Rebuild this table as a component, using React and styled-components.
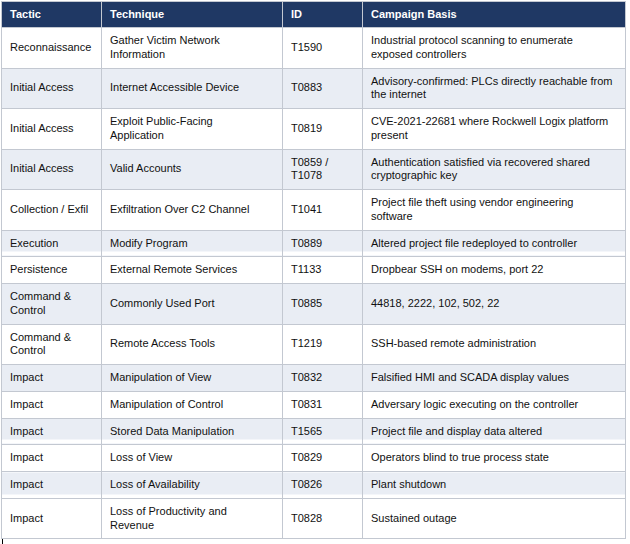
import React from 'react'
import styled, { createGlobalStyle } from 'styled-components'

const GlobalStyle = createGlobalStyle`
  body {
    margin: 0;
    background: #fff;
    font-family: "Liberation Sans", Arial, sans-serif;
  }
`

// width and right padding per column, taken from the source layout
const columns = [
  { title: 'Tactic', width: 100, padRight: 8 },
  { title: 'Technique', width: 181, padRight: 14 },
  { title: 'ID', width: 80, padRight: 8 },
  { title: 'Campaign Basis', width: 263, padRight: 10 },
]

const rows = [
  ['Reconnaissance', 'Gather Victim Network Information', 'T1590', 'Industrial protocol scanning to enumerate exposed controllers'],
  ['Initial Access', 'Internet Accessible Device', 'T0883', 'Advisory-confirmed: PLCs directly reachable from the internet'],
  ['Initial Access', 'Exploit Public-Facing Application', 'T0819', 'CVE-2021-22681 where Rockwell Logix platform present'],
  ['Initial Access', 'Valid Accounts', 'T0859 / T1078', 'Authentication satisfied via recovered shared cryptographic key'],
  ['Collection / Exfil', 'Exfiltration Over C2 Channel', 'T1041', 'Project file theft using vendor engineering software'],
  ['Execution', 'Modify Program', 'T0889', 'Altered project file redeployed to controller', true],
  ['Persistence', 'External Remote Services', 'T1133', 'Dropbear SSH on modems, port 22'],
  ['Command & Control', 'Commonly Used Port', 'T0885', '44818, 2222, 102, 502, 22'],
  ['Command & Control', 'Remote Access Tools', 'T1219', 'SSH-based remote administration'],
  ['Impact', 'Manipulation of View', 'T0832', 'Falsified HMI and SCADA display values'],
  ['Impact', 'Manipulation of Control', 'T0831', 'Adversary logic executing on the controller'],
  ['Impact', 'Stored Data Manipulation', 'T1565', 'Project file and display data altered', true],
  ['Impact', 'Loss of View', 'T0829', 'Operators blind to true process state'],
  ['Impact', 'Loss of Availability', 'T0826', 'Plant shutdown', true],
  ['Impact', 'Loss of Productivity and Revenue', 'T0828', 'Sustained outage'],
]

const Page = styled.div`
  padding: 1px 0 0 1px;
`

const Table = styled.table`
  width: 624px;
  border-collapse: collapse;
  table-layout: fixed;
  font-size: 11px;
  line-height: 13.75px;
  color: #111;
`

const HeadCell = styled.th`
  background: #1f3864;
  color: #fff;
  font-weight: bold;
  text-align: left;
  height: 25px;
  padding: 0 8px;
  border: 1px solid #c3c8d1;
  vertical-align: middle;
`

const Cell = styled.td`
  padding: 6px ${p => p.$pr}px 6px 8px;
  border: 1px solid #c3c8d1;
  vertical-align: middle;
  background: ${p =>
    !p.$shaded ? '#fff'
      : p.$strip ? 'linear-gradient(#e9edf4 calc(100% - 4px), #fff 0)'
      : '#e9edf4'};
`

const Caret = styled.div`
  width: 1px;
  height: 7px;
  margin-left: 1px;
  background: #000;
`

export default function App() {
  return (
    <Page>
      <GlobalStyle />
      <Table>
        <colgroup>
          {columns.map(c => <col key={c.title} style={{ width: c.width }} />)}
        </colgroup>
        <thead>
          <tr>
            {columns.map(c => <HeadCell key={c.title}>{c.title}</HeadCell>)}
          </tr>
        </thead>
        <tbody>
          {rows.map(([tactic, technique, id, basis, strip], i) => (
            <tr key={i}>
              {[tactic, technique, id, basis].map((text, j) => (
                <Cell key={j} $pr={columns[j].padRight} $shaded={i % 2 === 1} $strip={strip}>
                  {text}
                </Cell>
              ))}
            </tr>
          ))}
        </tbody>
      </Table>
      <Caret />
    </Page>
  )
}
